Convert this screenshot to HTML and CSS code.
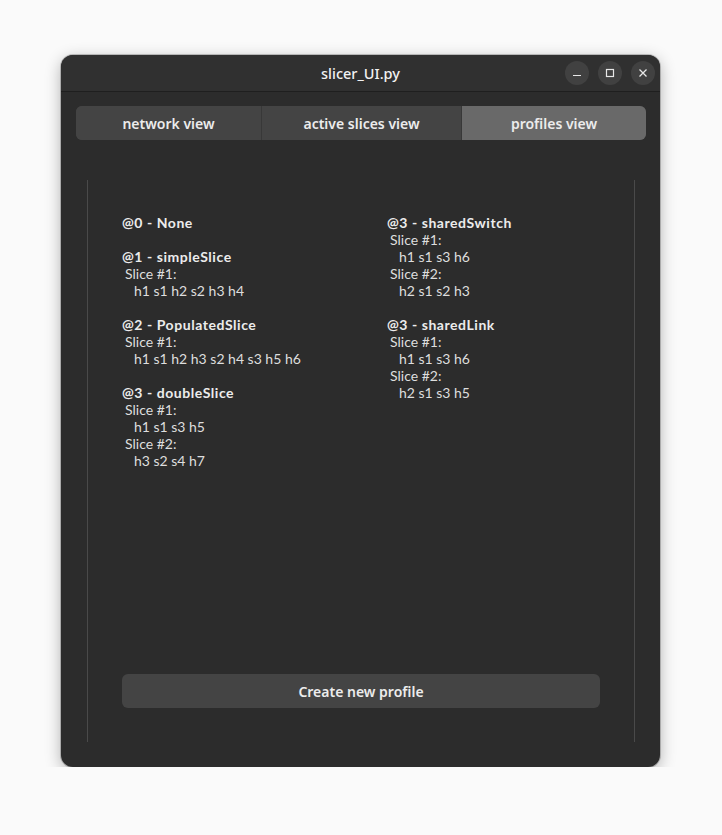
FILE: index.html
```html
<!DOCTYPE html>
<html>
<head>
<meta charset="utf-8">
<link rel="stylesheet" href="styles.css">
</head>
<body>
<div class="window">
  <div class="titlebar">
    <div class="title">slicer_UI.py</div>
    <div class="controls">
      <span class="ctl"><svg width="12" height="12" viewBox="0 0 12 12"><path d="M2 8.5h8" stroke="#e8e8e8" stroke-width="1.2"/></svg></span>
      <span class="ctl"><svg width="12" height="12" viewBox="0 0 12 12"><rect x="2.5" y="2.5" width="7" height="7" fill="none" stroke="#e8e8e8" stroke-width="1.2"/></svg></span>
      <span class="ctl"><svg width="12" height="12" viewBox="0 0 12 12"><path d="M2.5 2.5l7 7M9.5 2.5l-7 7" stroke="#e8e8e8" stroke-width="1.3"/></svg></span>
    </div>
  </div>
  <div class="content">
    <div class="tabs">
      <div class="tab">network view</div>
      <div class="tab">active slices view</div>
      <div class="tab active">profiles view</div>
    </div>
    <div class="panel">
      <div class="columns">
        <div class="col">
          <div class="h">@0 - None</div>
          <div class="gap"></div>
          <div class="h">@1 - simpleSlice</div>
          <div class="s">Slice #1:</div>
          <div class="p">h1 s1 h2 s2 h3 h4</div>
          <div class="gap"></div>
          <div class="h">@2 - PopulatedSlice</div>
          <div class="s">Slice #1:</div>
          <div class="p">h1 s1 h2 h3 s2 h4 s3 h5 h6</div>
          <div class="gap"></div>
          <div class="h">@3 - doubleSlice</div>
          <div class="s">Slice #1:</div>
          <div class="p">h1 s1 s3 h5</div>
          <div class="s">Slice #2:</div>
          <div class="p">h3 s2 s4 h7</div>
        </div>
        <div class="col">
          <div class="h">@3 - sharedSwitch</div>
          <div class="s">Slice #1:</div>
          <div class="p">h1 s1 s3 h6</div>
          <div class="s">Slice #2:</div>
          <div class="p">h2 s1 s2 h3</div>
          <div class="gap"></div>
          <div class="h">@3 - sharedLink</div>
          <div class="s">Slice #1:</div>
          <div class="p">h1 s1 s3 h6</div>
          <div class="s">Slice #2:</div>
          <div class="p">h2 s1 s3 h5</div>
        </div>
      </div>
      <div class="btn">Create new profile</div>
    </div>
  </div>
</div>
</body>
</html>
```
FILE: styles.css
```css
html, body {
  margin: 0;
  padding: 0;
  background: #fafafa;
}
body {
  padding: 55px 0 0 61px;
  font-family: "Noto Sans", "DejaVu Sans", sans-serif;
  color: #ececec;
}
.window {
  width: 599px;
  height: 712px;
  background: #2c2c2c;
  border-radius: 12px;
  box-shadow: 0 4px 16px rgba(0,0,0,0.3), 0 0 0 1px rgba(0,0,0,0.2);
  overflow: hidden;
  display: flex;
  flex-direction: column;
}
.titlebar {
  height: 36px;
  background: #303030;
  border-bottom: 1px solid #1f1f1f;
  position: relative;
  display: flex;
  align-items: center;
  justify-content: center;
  flex-shrink: 0;
}
.title {
  font-size: 14.5px;
  font-weight: 500;
  color: #f2f2f2;
}
.controls {
  position: absolute;
  right: 5px;
  top: 6px;
  display: flex;
  gap: 9px;
}
.ctl {
  width: 24px;
  height: 24px;
  border-radius: 50%;
  background: #414141;
  display: flex;
  align-items: center;
  justify-content: center;
}
.content {
  padding: 14px 14px 25px 15px;
  display: flex;
  flex-direction: column;
  flex: 1;
}
.tabs {
  display: flex;
  height: 34px;
  border-radius: 6px;
  overflow: hidden;
  background: #444;
}
.tab {
  display: flex;
  align-items: center;
  justify-content: center;
  font-size: 14px;
  font-weight: 600;
  color: #ececec;
  background: #444;
}
.tab:nth-child(1) { width: 185px; border-right: 1px solid #383838; }
.tab:nth-child(2) { width: 199px; border-right: 1px solid #383838; }
.tab.active { flex: 1; background: #696969; }
.panel {
  margin: 40px 11px 0 11px;
  border-left: 1px solid #4a4a4a;
  border-right: 1px solid #4a4a4a;
  flex: 1;
  display: flex;
  flex-direction: column;
  padding: 34px 34px 34px 34px;
}
.columns {
  display: flex;
  flex: 1;
}
.col {
  width: 265px;
  flex-shrink: 0;
  font-family: Lato, "Noto Sans", sans-serif;
  font-size: 14px;
  line-height: 17px;
}
.col + .col {
  width: auto;
  flex: 1;
}
.h {
  font-weight: 700;
  font-size: 14px;
  letter-spacing: 0.55px;
}
.s { padding-left: 3px; color: #dedede; }
.p { padding-left: 12px; color: #dedede; }
.gap { height: 17px; }
.btn {
  height: 34px;
  border-radius: 6px;
  background: #444;
  display: flex;
  align-items: center;
  justify-content: center;
  font-size: 14px;
  font-weight: 600;
  color: #ececec;
  width: 478px;
}
```
